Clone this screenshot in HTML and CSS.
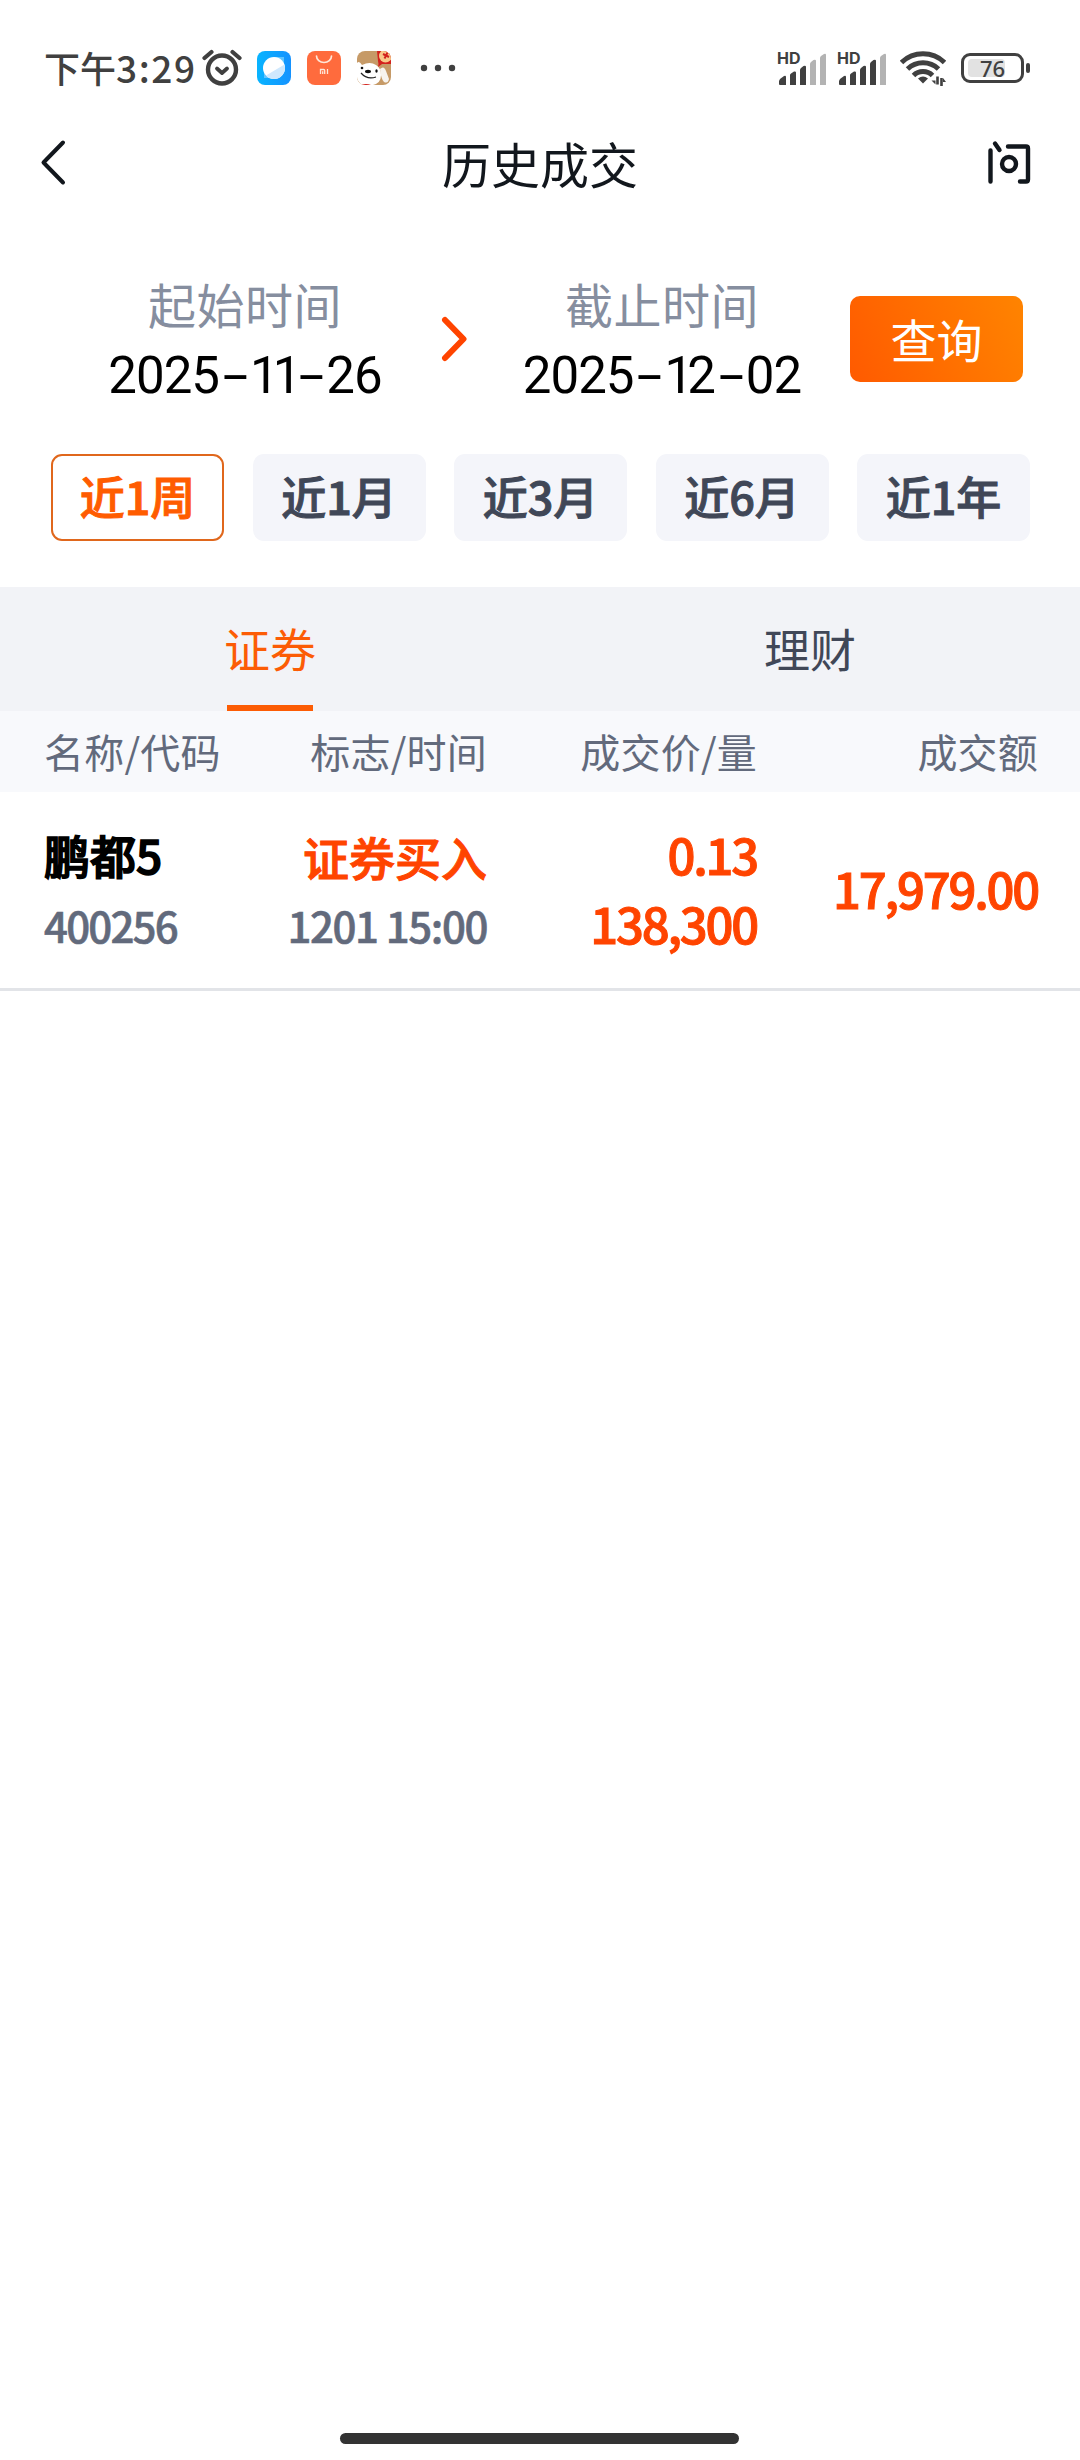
FILE: index.html
```
<!DOCTYPE html>
<html lang="zh-CN">
<head>
  <meta charset="UTF-8" />
  <meta name="viewport" content="width=device-width, initial-scale=1.0" />
  <title>历史成交</title>
  <link rel="stylesheet" href="styles.css">
</head>
<body>
  <div class="page">
    <div class="status-bar">
      <span class="clock">下午<span class="digits">3:29</span></span>
      <svg class="alarm" width="40" height="38" viewBox="0 0 40 38" fill="none" stroke="#404040" stroke-linecap="round">
        <circle cx="20" cy="20.500" r="14" stroke-width="4.400"></circle>
        <path d="M2.500 9 9.500 3M37.500 9 30.500 3" stroke-width="4.200"></path>
        <path d="M15 19.500l5 4.500 5-4.500" stroke-width="3.800" stroke-linejoin="round"></path>
      </svg>
      <div class="apps">
        <svg width="34" height="34" viewBox="0 0 34 34">
          <defs>
            <linearGradient id="blue" x1="0" y1="0" x2="1" y2="0">
              <stop offset="0" stop-color="#08b4ff"></stop>
              <stop offset="1" stop-color="#1592ff"></stop>
            </linearGradient>
          </defs>
          <rect width="34" height="34" rx="8" fill="url(#blue)"></rect>
          <path d="M7 17v10h10zM17 6h10v11z" fill="#5fc4ff"></path>
          <circle cx="17" cy="17" r="11" fill="#fff"></circle>
          <path d="M27.500 13.500A11 11 0 0 1 9 24.500z" fill="#cfe8fd"></path>
        </svg>
        <svg width="34" height="34" viewBox="0 0 34 34">
          <rect width="34" height="34" rx="8" fill="#ff6b3d"></rect>
          <path d="M9.500 5a7.500 6.500 0 0 0 15 0" fill="none" stroke="#ffe6d8" stroke-width="1.700" stroke-linecap="round"></path>
          <path d="M13.500 23v-4.500h3.200q1 0 1 1V23M15.700 20.200V23M20.500 18v5" fill="none" stroke="#ffe6d8" stroke-width="1.300"></path>
        </svg>
        <svg width="34" height="34" viewBox="0 0 34 34">
          <defs>
            <clipPath id="tile"><rect width="34" height="34" rx="8"></rect></clipPath>
          </defs>
          <g clip-path="url(#tile)">
            <rect width="34" height="34" fill="#c69a67"></rect>
            <path d="M20 0h14v13l-9 0-4 3q1-3 0-6z" fill="#d3221d"></path>
            <circle cx="28.500" cy="5" r="6.500" fill="#f9c98a"></circle>
            <path d="M26 3l6 3M30.500 1.500l-3 6" stroke="#d3221d" stroke-width="2"></path>
            <path d="M0 12q2-3 5 2 8-4 14 0 5 3 5 10 0 8-8 10H4l-4-6z" fill="#fff"></path>
            <path d="M23 18q4-4 6 2l3 8q-1 5-5 3-3-3-4-13z" fill="#f7f3ee"></path>
            <path d="M4 34q5-2 10 0z" fill="#d3221d"></path>
            <ellipse cx="11" cy="20.500" rx="3" ry="1.700" fill="#111"></ellipse>
            <circle cx="5" cy="17" r="1.300" fill="#111"></circle>
            <ellipse cx="19.500" cy="20" rx="1.200" ry="1.800" fill="#111"></ellipse>
            <path d="M4 22q6 7 15 4" fill="none" stroke="#222" stroke-width="1.200"></path>
          </g>
        </svg>
      </div>
      <svg class="more" width="36" height="8" viewBox="0 0 36 8" fill="#404040">
        <circle cx="4" cy="4" r="3.200"></circle>
        <circle cx="18" cy="4" r="3.200"></circle>
        <circle cx="32" cy="4" r="3.200"></circle>
      </svg>
      <div class="system">
        <div class="signal">
          <span class="hd">HD</span>
          <svg width="50" height="34" viewBox="0 0 50 34" fill="#404040">
            <path d="M2 28l4-3q2-1 2 1v8H2q-1 0-1-1v-3z"></path>
            <path d="M12 24q0-1 1-1.500l3-2q2-.5 2 1V34h-6z"></path>
            <path d="M22 19q0-1 1-2l2.500-2q2.500-1 2.500 1v18h-6z"></path>
            <path class="off" d="M32 13q0-1 1-2l2.500-2q2.500-1 2.500 1v24h-6z"></path>
            <path class="off" d="M42 7q0-1 1-2l3-2q2-1 2 1v30h-6z"></path>
          </svg>
        </div>
        <div class="signal">
          <span class="hd">HD</span>
          <svg width="50" height="34" viewBox="0 0 50 34" fill="#404040">
            <path d="M2 28l4-3q2-1 2 1v8H2q-1 0-1-1v-3z"></path>
            <path d="M12 24q0-1 1-1.500l3-2q2-.5 2 1V34h-6z"></path>
            <path d="M22 19q0-1 1-2l2.500-2q2.500-1 2.500 1v18h-6z"></path>
            <path d="M32 13q0-1 1-2l2.500-2q2.500-1 2.500 1v24h-6z"></path>
            <path class="off" d="M42 7q0-1 1-2l3-2q2-1 2 1v30h-6z"></path>
          </svg>
        </div>
        <svg class="wifi" width="46" height="36" viewBox="0 0 46 36" fill="none" stroke="#404040" stroke-width="5">
          <path d="M1.500 12.500a31 31 0 0 1 43 0"></path>
          <path d="M7.500 19a22.500 22.500 0 0 1 31 0"></path>
          <path d="M13.500 25.500a13.500 13.500 0 0 1 19 0"></path>
          <path d="M23 33.500l-5-5q5-4 10 0z" fill="#404040" stroke="none"></path>
          <path d="M37.500 26.500v8M41.500 36v-8" stroke-width="2.600"></path>
          <path d="M31.500 30.500h4v4zM43 28l3 4h-3z" fill="#404040" stroke="none"></path>
        </svg>
        <div class="battery">
          <span class="level">76</span>
        </div>
      </div>
    </div>

    <div class="nav-bar">
      <svg class="back" width="30" height="50" viewBox="0 0 30 50" fill="none" stroke="#12171d" stroke-width="4" stroke-linecap="round" stroke-linejoin="round">
        <path d="M26 4.500 6.500 24.500l19.500 20"></path>
      </svg>
      <h1 class="title">历史成交</h1>
      <svg class="ask" width="46" height="48" viewBox="0 0 46 48" fill="none" stroke="#12171d" stroke-width="4.400" stroke-linecap="round">
        <path d="M4.500 11.500v31M9 4.500l4.500 6.500"></path>
        <path d="M22 7.500h18q2 0 2 2v31q0 2-2 2h-6"></path>
        <circle cx="23" cy="25" r="7"></circle>
      </svg>
    </div>

    <div class="range">
      <div class="date">
        <span class="date-label">起始时间</span>
        <span class="date-value">2025<i class="dash">-</i><span class="ones">11</span><i class="dash">-</i>26</span>
      </div>
      <svg class="arrow" width="27" height="46" viewBox="0 0 27 46" fill="none" stroke="#ff4400" stroke-width="6" stroke-linecap="round" stroke-linejoin="round">
        <path d="M4 4l18.500 19L4 42"></path>
      </svg>
      <div class="date">
        <span class="date-label">截止时间</span>
        <span class="date-value">2025<i class="dash">-</i><span class="ones">1</span>2<i class="dash">-</i>02</span>
      </div>
      <button class="query">查询</button>
    </div>

    <div class="periods">
      <button class="period active">近1周</button>
      <button class="period">近1月</button>
      <button class="period">近3月</button>
      <button class="period">近6月</button>
      <button class="period">近1年</button>
    </div>

    <div class="tabs">
      <div class="tab active"><span>证券</span></div>
      <div class="tab"><span>理财</span></div>
    </div>

    <div class="row head">
      <span>名称/代码</span>
      <span>标志/时间</span>
      <span>成交价/量</span>
      <span>成交额</span>
    </div>
    <div class="row deal">
      <div class="cell">
        <span class="name">鹏都5</span>
        <span class="sub code">400256</span>
      </div>
      <div class="cell">
        <span class="side">证券买入</span>
        <span class="sub time">1201 15:00</span>
      </div>
      <div class="cell">
        <span class="num">0.13</span>
        <span class="num">138,300</span>
      </div>
      <div class="cell">
        <span class="num">17,979.00</span>
      </div>
    </div>

    <div class="home-bar"></div>
  </div>
</body>
</html>
```
FILE: styles.css
```
* {
  box-sizing: border-box;
}
body {
  margin: 0;
  background: #fff;
  font-family: "Noto Sans CJK SC", sans-serif;
  color: #12171d;
}
.page {
  width: 1080px;
  height: 2460px;
  display: flex;
  flex-direction: column;
}
svg {
  display: block;
  flex: none;
}
button {
  font-family: inherit;
  border: none;
  padding: 0;
  cursor: pointer;
}

/* status bar */
.status-bar {
  height: 120px;
  padding: 16px 50px 0 44px;
  display: flex;
  align-items: center;
  color: #404040;
}
.clock {
  width: 158px;
  padding-bottom: 2px;
  font-size: 36px;
  font-weight: 500;
  line-height: 50px;
  white-space: nowrap;
}
.digits {
  font-size: 37px;
  letter-spacing: 1.6px;
}
.apps {
  display: flex;
  gap: 16px;
  margin-left: 15px;
}
.more {
  margin-left: 29px;
}
.system {
  margin-left: auto;
  display: flex;
  align-items: center;
}
.signal {
  position: relative;
  width: 60px;
}
.off {
  fill: #b3b3b3;
}
.hd {
  position: absolute;
  left: -1px;
  top: -1px;
  font: 700 16px/16px Inter, sans-serif;
}
.wifi {
  margin-left: 2px;
}
.battery {
  position: relative;
  width: 63px;
  height: 30px;
  margin: 0 6px 0 15px;
  padding: 3px 4px;
  border: 3px solid #404040;
  border-radius: 9px;
}
.battery::after {
  content: "";
  position: absolute;
  right: -9px;
  top: 7px;
  width: 4px;
  height: 10px;
  border-radius: 2px;
  background: #404040;
}
.level {
  display: block;
  width: 37px;
  height: 18px;
  padding-left: 12px;
  border-radius: 4px;
  background: #e2e2e2;
  font: 500 22px/18px "Noto Sans", sans-serif;
}

/* title */
.nav-bar {
  height: 86px;
  padding: 0 48px 0 37px;
  display: flex;
  align-items: center;
  justify-content: space-between;
}
.title {
  margin: 0 0 0 27px;
  padding-bottom: 1px;
  font-size: 49px;
  font-weight: 400;
  line-height: 60px;
}

/* date range */
.range {
  height: 248px;
  padding: 21px 57px 3px 51px;
  display: grid;
  grid-template-columns: 390px 27px 384px 171px;
  align-items: center;
}
.date {
  display: flex;
  flex-direction: column;
  align-items: center;
}
.date:first-child {
  padding-right: 2px;
}
.date:nth-child(3) {
  padding-left: 4px;
}
.date-label {
  font-size: 48px;
  line-height: 68px;
  color: #868e9f;
  letter-spacing: 0.5px;
}
.date-value {
  padding-top: 3px;
  margin-bottom: -3px;
  font: 400 51px/72px Roboto, sans-serif;
  letter-spacing: -1px;
  color: #000;
  white-space: nowrap;
}
.dash {
  display: inline-block;
  width: 31px;
  text-align: center;
  font-style: normal;
  transform: scaleX(1.8);
}
.ones {
  letter-spacing: -6px;
}
.query {
  width: 173px;
  height: 86px;
  margin-left: -2px;
  padding-bottom: 3px;
  border-radius: 10px;
  background: linear-gradient(65deg, #ff5a00, #ff8400);
  color: #fff;
  font-size: 46px;
}

/* quick periods */
.periods {
  height: 133px;
  padding: 0 50px 0 51px;
  display: flex;
  justify-content: space-between;
}
.period {
  width: 173px;
  height: 87px;
  padding-bottom: 4px;
  border-radius: 11px;
  background: #f4f5fa;
  color: #404757;
  font-size: 45px;
  font-weight: 500;
  -webkit-text-stroke: 1px currentColor;
}
.period.active {
  border: 2px solid #e0671c;
  background: #fff;
  color: #ff5c00;
}

/* tabs */
.tabs {
  height: 124px;
  display: flex;
  background: #f2f3f7;
}
.tab {
  flex: 1;
  display: flex;
  justify-content: center;
  font-size: 46px;
  line-height: 121px;
  color: #404757;
}
.tab.active {
  color: #fc5c05;
}
.tab.active span {
  width: 86px;
  height: 124px;
  display: flex;
  justify-content: center;
  white-space: nowrap;
  border-bottom: 6px solid #fc5c05;
}

/* deals */
.row {
  padding: 0 42px 0 44px;
  display: grid;
  grid-template-columns: 190px 253px 270px 281px;
  text-align: right;
}
.row > :first-child {
  text-align: left;
}
.head {
  height: 81px;
  background: #f8f9fc;
  color: #626a7c;
  font-size: 40px;
  line-height: 81px;
  letter-spacing: 0.2px;
  white-space: nowrap;
}
.deal {
  height: 199px;
  align-items: center;
  border-bottom: 3px solid #e2e4e8;
  font-weight: 500;
  white-space: nowrap;
  -webkit-text-stroke: 1px currentColor;
}
.cell {
  display: flex;
  flex-direction: column;
  padding-bottom: 5px;
}
.name {
  padding-top: 3px;
  font-size: 46px;
  line-height: 70px;
  color: #000;
  -webkit-text-stroke: 1.6px #000;
}
.side {
  padding-top: 4px;
  font-size: 46px;
  line-height: 70px;
  color: #ff4400;
}
.sub {
  font-size: 42px;
  line-height: 70px;
  letter-spacing: -1.4px;
  color: #626a7c;
  -webkit-text-stroke-width: 0.6px;
}
.time {
  line-height: 68px;
}
.code {
  padding-top: 1px;
  letter-spacing: -1.8px;
}
.num {
  font-size: 49px;
  line-height: 69px;
  letter-spacing: -2.200px;
  color: #ff4400;
}

.home-bar {
  width: 399px;
  height: 11px;
  margin: auto auto 16px 340px;
  border-radius: 6px;
  background: #333;
}
```
